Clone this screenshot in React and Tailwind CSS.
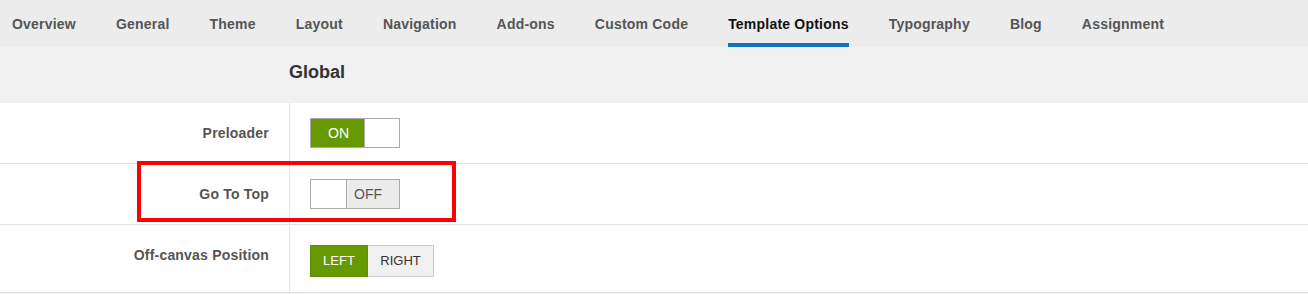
import React from "react";

const tabs = [
  "Overview",
  "General",
  "Theme",
  "Layout",
  "Navigation",
  "Add-ons",
  "Custom Code",
  "Template Options",
  "Typography",
  "Blog",
  "Assignment",
];

function Label({ children }) {
  return (
    <div className="border-r border-[#e5e5e5] pr-[20px] pt-[20px] text-right text-[14px] font-bold leading-5 text-[#555] tracking-[0.2px]">
      {children}
    </div>
  );
}

export default function App() {
  return (
    <div
      className="relative w-[1308px] h-[294px] overflow-hidden bg-[#f1f1f1]"
      style={{ fontFamily: '"Liberation Sans", Arial, sans-serif' }}
    >
      {/* tab bar */}
      <div className="flex h-[47px] gap-[40px] bg-[#ececec] pl-[12px]">
        {tabs.map((t) => (
          <div
            key={t}
            className={
              t === "Template Options"
                ? "h-full border-b-4 border-[#0b75b8] pt-[14px] text-[14px] font-bold leading-5 tracking-[0.21px] text-[#111]"
                : "h-full border-b-4 border-transparent pt-[14px] text-[14px] font-bold leading-5 tracking-[0.21px] text-[#555]"
            }
          >
            {t}
          </div>
        ))}
      </div>

      {/* header */}
      <div className="grid h-[56px] grid-cols-[289px_1fr] bg-[#f1f1f1]">
        <div />
        <div className="pt-[13px] text-[18px] font-bold leading-6 text-[#333]">
          Global
        </div>
      </div>

      {/* rows */}
      <div className="bg-white">
        <div className="grid grid-cols-[290px_1fr] border-b border-[#e2e2e2]">
          <Label>Preloader</Label>
          <div className="pl-[20px] pt-[15px] pb-[15px]">
            <div className="flex h-[30px] w-[90px] border border-[#aaa]">
              <div className="flex w-[53px] items-center bg-[#669900] pl-[17px] text-[14px] leading-5 text-white">
                ON
              </div>
              <div className="flex-1 border-l border-[#aaa] bg-white" />
            </div>
          </div>
        </div>

        <div className="grid grid-cols-[290px_1fr] border-b border-[#e2e2e2]">
          <Label>Go To Top</Label>
          <div className="pl-[20px] pt-[15px] pb-[15px]">
            <div className="flex h-[30px] w-[90px] border border-[#aaa]">
              <div className="w-[35px] bg-white" />
              <div className="flex flex-1 items-center border-l border-[#aaa] bg-[#ececec] pl-[7px] text-[14px] leading-5 text-[#555]">
                OFF
              </div>
            </div>
          </div>
        </div>

        <div className="grid grid-cols-[290px_1fr] border-b border-[#e2e2e2]">
          <Label>Off-canvas Position</Label>
          <div className="pl-[20px] pt-[20px] pb-[15px]">
            <div className="flex h-[32px]">
              <div className="flex w-[58px] items-center justify-center border border-[#5f8f00] bg-[#669900] text-[13px] leading-5 text-white">
                LEFT
              </div>
              <div className="flex w-[66px] items-center justify-center border border-l-0 border-[#ccc] bg-[#f0f0f0] text-[13px] leading-5 text-[#333]">
                RIGHT
              </div>
            </div>
          </div>
        </div>
      </div>

      {/* red annotation box */}
      <div className="absolute left-[137px] top-[161px] h-[61px] w-[319px] border-4 border-[#ff0000]" />
    </div>
  );
}
